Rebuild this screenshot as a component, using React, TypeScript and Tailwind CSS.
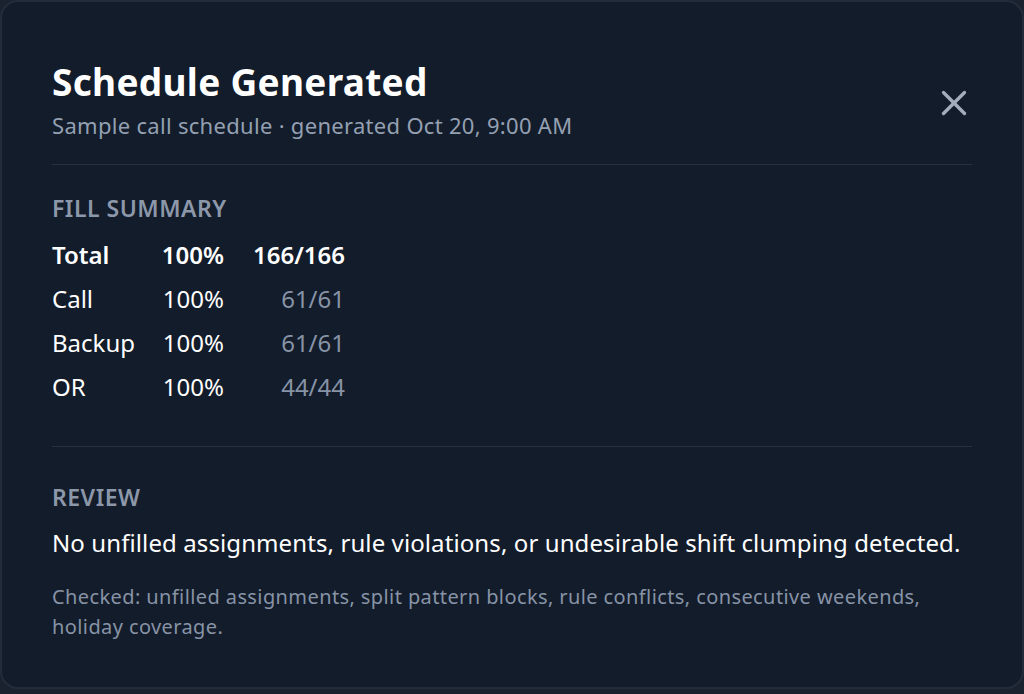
import React from 'react';
import { X } from 'lucide-react';

const rows = [
  { label: 'Total', pct: '100%', count: '166/166', bold: true },
  { label: 'Call', pct: '100%', count: '61/61' },
  { label: 'Backup', pct: '100%', count: '61/61' },
  { label: 'OR', pct: '100%', count: '44/44' },
];

export default function App() {
  return (
    <div className="h-[694px] w-[1024px] bg-[#1a2230] font-['Noto_Sans',sans-serif]">
      <div className="h-[689px] rounded-[18px] border-2 border-[#222c3b] bg-[#131c2a] px-[50px] pt-[56px]">
        {/* Header */}
        <div className="flex items-start justify-between border-b border-[#263141] pb-[24px]">
          <div>
            <h1 className="text-[37px] font-bold leading-[48px] tracking-[0.3px] text-white">Schedule Generated</h1>
            <p className="mt-[4px] text-[22px] leading-[30px] tracking-[0.3px] text-[#94a0b2]">
              Sample call schedule · generated Oct 20, 9:00 AM
            </p>
          </div>
          <button className="mt-[24px] mr-[-3px] text-[#a3aebd]">
            <X className="h-[42px] w-[42px]" strokeWidth={1.9} />
          </button>
        </div>

        {/* Fill summary */}
        <div className="border-b border-[#263141] pt-[27px] pb-[37px]">
          <h3 className="text-[23px] font-semibold uppercase leading-[32px] tracking-[0.5px] text-[#8c98aa]">
            Fill Summary
          </h3>
          <div className="mt-[9px] grid grid-cols-[108px_64px_121px] text-[24px]">
            {rows.map(r => (
              <React.Fragment key={r.label}>
                <div className={`leading-[44px] text-white ${r.bold ? 'font-semibold' : ''}`}>{r.label}</div>
                <div className={`text-right leading-[44px] text-white ${r.bold ? 'font-semibold' : ''}`}>{r.pct}</div>
                <div className={`text-right leading-[44px] ${r.bold ? 'font-semibold text-white' : 'text-[#8793a6]'}`}>
                  {r.count}
                </div>
              </React.Fragment>
            ))}
          </div>
        </div>

        {/* Review */}
        <div className="pt-[34px]">
          <h3 className="text-[23px] font-semibold uppercase leading-[32px] tracking-[0.5px] text-[#8c98aa]">
            Review
          </h3>
          <p className="mt-[13px] text-[24px] leading-[34px] tracking-[0.1px] text-white">
            No unfilled assignments, rule violations, or undesirable shift clumping detected.
          </p>
          <p className="mt-[22px] max-w-[900px] text-[20px] leading-[30px] tracking-[0.4px] text-[#8793a6]">
            Checked: unfilled assignments, split pattern blocks, rule conflicts, consecutive weekends, holiday coverage.
          </p>
        </div>
      </div>
    </div>
  );
}
